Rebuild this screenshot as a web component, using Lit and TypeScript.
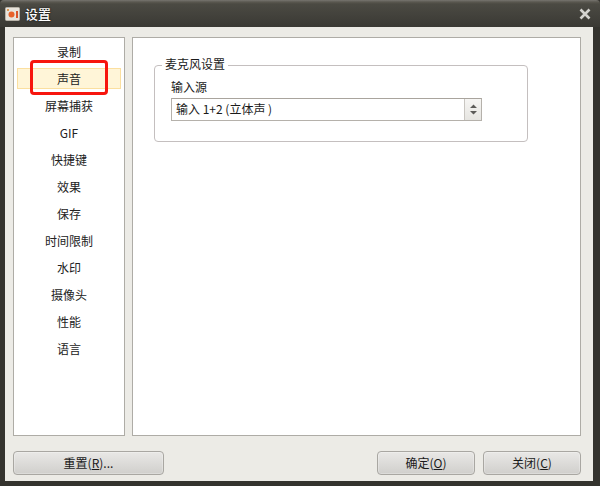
import { LitElement, html, css } from "lit";
import { customElement } from "lit/decorators.js";

const ITEMS = ["录制", "声音", "屏幕捕获", "GIF", "快捷键", "效果", "保存", "时间限制", "水印", "摄像头", "性能", "语言"];

@customElement("app-root")
export class AppRoot extends LitElement {
  static styles = css`
    :host {
      display: block;
      width: 600px;
      height: 486px;
      overflow: hidden;
      font-family: "Noto Sans CJK SC", "Noto Sans", sans-serif;
      font-size: 12px;
      color: #1a1a1a;
    }
    .win {
      position: relative;
      width: 600px;
      height: 486px;
      box-sizing: border-box;
      display: flex;
      flex-direction: column;
      background: #34332e;
      padding: 0 7px 5px 5px;
    }
    .title {
      height: 27px;
      flex: none;
      margin: 0 -7px 0 -5px;
      padding: 0 9px 0 5px;
      display: flex;
      align-items: center;
      gap: 5px;
      box-sizing: border-box;
      background: linear-gradient(#77756f 0, #5a5850 2px, #4b4a43 4px, #3a3934 100%);
      border-radius: 4px 4px 0 0;
      color: #fff;
      font-size: 13px;
      font-weight: 500;
    }
    .title svg { flex: none; }
    .title .name { flex: 1; text-shadow: 0 0 2px #000; }
    .body {
      flex: 1;
      background: #ecebe6;
      padding: 10px 12px 5px 8px;
      display: flex;
      flex-direction: column;
      min-height: 0;
    }
    .panes {
      display: flex;
      gap: 7px;
      height: 399px;
      flex: none;
    }
    .list {
      width: 112px;
      box-sizing: border-box;
      background: #fff;
      border: 1px solid #aeaca6;
      padding: 0 3px;
    }
    .list .item {
      height: 27px;
      line-height: 27px;
      text-align: center;
      color: #222;
    }
    .list .item.first { margin-top: 0; }
    .list .item.sel {
      background: #fff5d8;
      box-shadow: inset 0 0 0 1px #fbdf9f;
      height: 21px;
      line-height: 21px;
      margin: 3px 0;
    }
    .main {
      flex: 1;
      box-sizing: border-box;
      background: #fff;
      border: 1px solid #aeaca6;
      padding: 27px 52px 0 21px;
    }
    .group {
      position: relative;
      box-sizing: border-box;
      height: 77px;
      border: 1px solid #c4bfbf;
      border-radius: 4px;
      padding: 12px 45px 0 16px;
    }
    .legend {
      position: absolute;
      left: 7px;
      top: -11px;
      padding: 0 3px;
      line-height: 18px;
      background: #fff;
    }
    .lbl { line-height: 18px; height: 20px; margin-bottom: 0; }
    .combo {
      height: 23px;
      box-sizing: border-box;
      border: 1px solid #b5b1ab;
      border-top-color: #a9a49d;
      display: flex;
      align-items: stretch;
      background: #fff;
    }
    .combo .val { flex: 1; padding-left: 4px; line-height: 20px; white-space: pre; }
    .combo .spin {
      width: 16px;
      flex: none;
      border-left: 1px solid #c9c6c1;
      background: linear-gradient(#f6f5f3, #e6e5e1);
      display: flex;
      align-items: center;
      justify-content: center;
    }
    .foot {
      margin-top: 15px;
      display: flex;
      align-items: flex-start;
    }
    .btn {
      height: 24px;
      box-sizing: border-box;
      border: 1px solid #a9a7a2;
      border-radius: 4px;
      background: linear-gradient(#e9e8e6, #d0cfcc);
      text-align: center;
      line-height: 22px;
      color: #1a1a1a;
      box-shadow: inset 0 0 0 1px rgba(255, 255, 255, 0.25);
    }
    .reset { width: 151px; }
    .ok { width: 98px; margin-left: auto; }
    .close { width: 98px; margin-left: 8px; }
    .mark { text-decoration: underline; }
    .callout {
      position: absolute;
      left: 30px;
      top: 60px;
      width: 78px;
      height: 35px;
      box-sizing: border-box;
      border: 3px solid #f7150e;
      border-radius: 4px;
    }
  `;

  render() {
    return html`
      <div class="win">
        <div class="title">
          <svg width="15" height="14" viewBox="0 0 15 14">
            <rect x="0.5" y="0.5" width="14" height="13" rx="1" fill="#e8e4dc" stroke="#b8b3a9"/>
            <circle cx="6.5" cy="7.5" r="3" fill="#e8622a"/>
            <rect x="11" y="4" width="2" height="7" fill="#d9542a"/>
            <circle cx="3" cy="3" r="1" fill="#d9822a"/>
          </svg>
          <span class="name">设置</span>
          <svg width="12" height="12" viewBox="0 0 12 12">
            <path d="M1.5 1.5 L10.5 10.5 M10.5 1.5 L1.5 10.5" stroke="#d4d3cf" stroke-width="2.6" fill="none"/>
          </svg>
        </div>
        <div class="body">
          <div class="panes">
            <div class="list">
              ${ITEMS.map(
                (t, i) => html`<div class="item ${i === 1 ? "sel" : ""}">${t}</div>`
              )}
            </div>
            <div class="main">
              <div class="group">
                <div class="legend">麦克风设置</div>
                <div class="lbl">输入源</div>
                <div class="combo">
                  <div class="val">输入 1+2 (立体声 )</div>
                  <div class="spin">
                    <svg width="9" height="13" viewBox="0 0 9 13">
                      <path d="M4.5 1.5 L8 5 H1 Z M1 8 H8 L4.5 11.5 Z" fill="#5c5b58"/>
                    </svg>
                  </div>
                </div>
              </div>
            </div>
          </div>
          <div class="foot">
            <div class="btn reset">重置(<span class="mark">R</span>)...</div>
            <div class="btn ok">确定(<span class="mark">O</span>)</div>
            <div class="btn close">关闭(<span class="mark">C</span>)</div>
          </div>
        </div>
        <div class="callout"></div>
      </div>
    `;
  }
}
